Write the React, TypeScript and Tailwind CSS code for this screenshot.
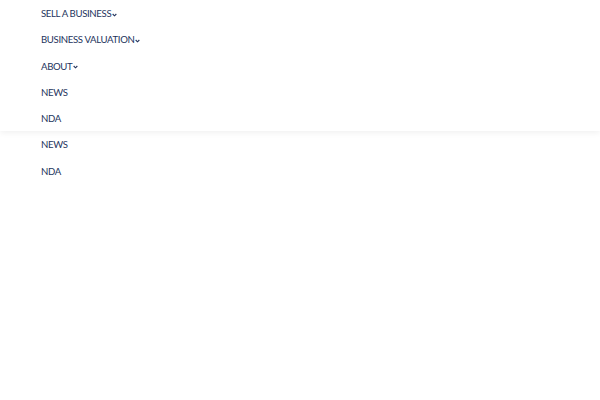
const items = [
  { label: "SELL A BUSINESS", drop: true },
  { label: "BUSINESS VALUATION", drop: true },
  { label: "ABOUT", drop: true },
  { label: "NEWS", drop: false },
  { label: "NDA", drop: false },
];

const extra = ["NEWS", "NDA"];

function Chevron() {
  return (
    <svg width="5" height="4" viewBox="0 0 6 4" className="ml-[1px] mt-[1px]">
      <path d="M0.8 0.8 L3 3 L5.2 0.8" fill="none" stroke="#23335c" strokeWidth="1.3" />
    </svg>
  );
}

function NavItem({ label, drop }: { label: string; drop?: boolean }) {
  return (
    <li className="h-[26.3px] flex items-center pt-[2px]">
      <a href="#" className="flex items-center text-[9.6px] text-[#23335c] tracking-[-0.35px]">
        {label}
        {drop && <Chevron />}
      </a>
    </li>
  );
}

export default function App() {
  return (
    <div className="min-h-[400px] w-[600px] bg-white" style={{ fontFamily: "Lato, 'Open Sans', sans-serif" }}>
      <header className="bg-white shadow-[0_2px_6px_rgba(0,0,0,0.06)] relative">
        <ul className="pl-[41px]">
          {items.map((it, i) => (
            <NavItem key={i} label={it.label} drop={it.drop} />
          ))}
        </ul>
      </header>
      <ul className="pl-[41px]">
        {extra.map((l, i) => (
          <NavItem key={i} label={l} />
        ))}
      </ul>
    </div>
  );
}
